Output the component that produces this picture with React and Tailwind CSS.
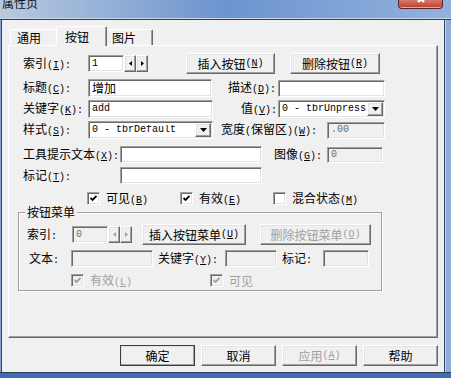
import React from "react";

// classic 3D edges
const raised =
  "border border-t-white border-l-white border-r-[#696969] border-b-[#696969] shadow-[inset_-1px_-1px_0_#a0a0a0,inset_1px_1px_0_#e3e3e3]";
const sunken =
  "border border-t-[#a0a0a0] border-l-[#a0a0a0] border-r-white border-b-white shadow-[inset_1px_1px_0_#696969,inset_-1px_-1px_0_#e3e3e3]";
const mono = "font-['Liberation_Mono',monospace] text-[10px]";

// "(X):" part of a label
function K({ k, colon = true }) {
  return (
    <span className={mono}>
      (<u className="underline-offset-1">{k}</u>){colon ? ":" : ""}
    </span>
  );
}

function Btn({ className = "", disabled, children }) {
  return (
    <button
      type="button"
      className={`${raised} flex items-center justify-center bg-[#f0f0f0] ${
        disabled ? "text-[#a0a0a0]" : "text-black"
      } ${className}`}
    >
      {children}
    </button>
  );
}

function Input({ className = "", value, disabled, isMono }) {
  return (
    <div
      className={`${sunken} flex items-center pl-[3px] overflow-hidden whitespace-nowrap ${
        disabled ? "bg-[#f0f0f0] text-[#6d6d6d]" : "bg-white"
      } ${className}`}
    >
      <span className={isMono ? mono : ""}>{value}</span>
    </div>
  );
}

function Arrow() {
  return (
    <svg width="7" height="4" viewBox="0 0 7 4">
      <path d="M0 0h7L3.5 4z" fill="black" />
    </svg>
  );
}

function Combo({ className = "", value }) {
  return (
    <div className={`${sunken} flex items-center bg-white ${className}`}>
      <span className={`flex-1 pl-[3px] overflow-hidden whitespace-nowrap ${mono}`}>
        {value}
      </span>
      <div
        className={`${raised} w-[16px] h-[14px] mr-[1px] flex items-center justify-center bg-[#f0f0f0]`}
      >
        <Arrow />
      </div>
    </div>
  );
}

function Spin({ disabled }) {
  const fill = disabled ? "#a0a0a0" : "black";
  return (
    <div className="flex">
      <div className={`${raised} w-[12px] h-[17px] flex items-center justify-center bg-[#f0f0f0]`}>
        <svg width="3" height="5" viewBox="0 0 3 5">
          <path d="M3 0v5L0 2.5z" fill={fill} />
        </svg>
      </div>
      <div className={`${raised} w-[12px] h-[17px] flex items-center justify-center bg-[#f0f0f0]`}>
        <svg width="3" height="5" viewBox="0 0 3 5">
          <path d="M0 0v5L3 2.5z" fill={fill} />
        </svg>
      </div>
    </div>
  );
}

function Check({ checked = true, disabled, children }) {
  return (
    <div className={`flex items-center gap-[6px] ${disabled ? "text-[#a0a0a0]" : ""}`}>
      <div
        className={`${sunken} w-[13px] h-[13px] flex items-center justify-center ${
          disabled ? "bg-[#f0f0f0]" : "bg-white"
        }`}
      >
        {checked && (
          <svg width="7" height="7" viewBox="0 0 7 7">
            <path
              d="M0.5 3L2.5 5L6.5 1"
              fill="none"
              stroke={disabled ? "#a0a0a0" : "black"}
              strokeWidth="1.8"
            />
          </svg>
        )}
      </div>
      <span>{children}</span>
    </div>
  );
}

export default function App() {
  return (
    <div className="w-[451px] h-[378px] overflow-hidden flex flex-col bg-[#7a9dd3] text-[12px] leading-none text-black font-['Noto_Sans_CJK_SC',sans-serif]">

      {/* TITLE BAR */}
      <div className="h-[20px] shrink-0 flex items-start bg-linear-to-r from-[#b9c9df] via-[#6c94ce] to-[#93b2de] border-b border-b-[#2e3e5b] shadow-[inset_0_-1px_0_#c9d9ee]">
        <span className="-mt-[3px] ml-[2px] text-[12px] leading-[12px] text-[#111]">
          属性页
        </span>
        <div className="ml-auto mr-[8px] w-[45px] h-[9px] rounded-b-[4px] border border-t-0 border-[#5a2420] bg-linear-to-b from-[#d9786a] to-[#b83a2c] shadow-[inset_0_-1px_0_#e8a59a] flex justify-center overflow-hidden">
          <svg width="12" height="6" viewBox="0 0 12 6" className="-mt-[1px]">
            <path d="M2 -4L9 3M10 -4L3 3" stroke="white" strokeWidth="2.4" />
          </svg>
        </div>
      </div>

      {/* MIDDLE */}
      <div className="flex h-[352px] shrink-0">

        {/* LEFT FRAME */}
        <div className="w-[2px] bg-[#8aa5d3] border-r border-r-[#34476a]" />

        {/* CLIENT */}
        <div className="w-[442px] bg-[#f0f0f0] flex flex-col pl-[6px] pt-[6px]">

          {/* TABS */}
          <div className="h-[19px] flex items-end">
            <div className="ml-[2px] w-[48px] h-[16px] flex items-center pl-[6px] border-t border-l border-t-white border-l-white rounded-tl-[2px]">
              通用
            </div>
            <div className="-ml-[2px] -mb-[1px] relative z-10 w-[51px] h-[20px] flex items-center pl-[8px] bg-[#f0f0f0] border-t border-l border-r border-t-white border-l-white border-r-[#696969] rounded-t-[2px] shadow-[inset_-1px_0_0_#a0a0a0]">
              按钮
            </div>
            <div className="-ml-[2px] w-[48px] h-[16px] flex items-center pl-[7px] border-t border-r border-t-white border-r-[#696969] rounded-tr-[2px] shadow-[inset_-1px_0_0_#a0a0a0]">
              图片
            </div>
          </div>

          {/* PANEL */}
          <div className="w-[430px] h-[293px] border border-t-white border-l-white border-r-[#696969] border-b-[#696969] shadow-[inset_-1px_-1px_0_#a0a0a0] flex flex-col">

            {/* ROW 1 */}
            <div className="mt-[7px] h-[21px] flex items-center">
              <span className="ml-[14px] w-[65px]">索引<K k="I" /></span>
              <Input className="w-[36px] h-[17px]" value="1" isMono />
              <Spin />
              <Btn className="ml-[38px] w-[89px] h-[21px]">插入按钮<K k="N" colon={false} /></Btn>
              <Btn className="ml-[15px] w-[90px] h-[21px]">删除按钮<K k="R" colon={false} /></Btn>
            </div>

            {/* ROW 2 */}
            <div className="mt-[5px] h-[18px] flex items-center">
              <span className="ml-[14px] w-[65px]">标题<K k="C" /></span>
              <Input className="w-[124px] h-[18px]" value="增加" />
              <span className="ml-[16px] w-[50px]">描述<K k="D" /></span>
              <Input className="w-[107px] h-[17px]" value="" />
            </div>

            {/* ROW 3 */}
            <div className="mt-[3px] h-[18px] flex items-center">
              <span className="ml-[14px] w-[65px]">关键字<K k="K" /></span>
              <Input className="w-[125px] h-[18px]" value="add" isMono />
              <span className="ml-[28px] w-[37px]">值<K k="V" /></span>
              <Combo className="w-[107px] h-[18px]" value="0 - tbrUnpress" />
            </div>

            {/* ROW 4 */}
            <div className="mt-[3px] h-[18px] flex items-center">
              <span className="ml-[14px] w-[65px]">样式<K k="S" /></span>
              <Combo className="w-[125px] h-[18px]" value="0 - tbrDefault" />
              <span className="ml-[8px] w-[106px] whitespace-nowrap">
                宽度<span className={mono}>(</span>保留区<span className={mono}>)</span><K k="W" />
              </span>
              <Input className="w-[58px] h-[17px]" value=".00" disabled isMono />
            </div>

            {/* ROW 5 */}
            <div className="mt-[7px] h-[17px] flex items-center">
              <span className="ml-[14px] w-[97px]">工具提示文本<K k="X" /></span>
              <Input className="w-[142px] h-[17px]" value="" />
              <span className="ml-[12px] w-[53px]">图像<K k="G" /></span>
              <Input className="w-[56px] h-[16px]" value="0" disabled isMono />
            </div>

            {/* ROW 6 */}
            <div className="mt-[4px] h-[17px] flex items-center">
              <span className="ml-[14px] w-[97px]">标记<K k="T" /></span>
              <Input className="w-[142px] h-[17px]" value="" />
            </div>

            {/* ROW 7 */}
            <div className="mt-[8px] h-[13px] flex items-center">
              <div className="ml-[78px] w-[93px]">
                <Check>可见<K k="B" colon={false} /></Check>
              </div>
              <div className="w-[93px]">
                <Check>有效<K k="E" colon={false} /></Check>
              </div>
              <Check checked={false}>混合状态<K k="M" colon={false} /></Check>
            </div>

            {/* BUTTON MENU GROUP */}
            <fieldset className="mt-[1px] ml-[9px] w-[364px] border border-[#a0a0a0] shadow-[inset_1px_1px_0_white,1px_1px_0_white] pb-[3px]">
              <legend className="ml-[6px] px-[2px] bg-[#f0f0f0] leading-[12px]">按钮菜单</legend>

              <div className="mt-[6px] h-[21px] flex items-center">
                <span className="ml-[8px] w-[45px]">索引<span className={mono}>:</span></span>
                <Input className="w-[36px] h-[17px]" value="0" disabled isMono />
                <Spin disabled />
                <Btn className="ml-[10px] w-[104px] h-[21px]">插入按钮菜单<K k="U" colon={false} /></Btn>
                <Btn className="ml-[14px] w-[111px] h-[21px]" disabled>删除按钮菜单<K k="O" colon={false} /></Btn>
              </div>

              <div className="mt-[5px] h-[17px] flex items-center">
                <span className="ml-[10px] w-[42px]">文本<span className={mono}>:</span></span>
                <Input className="w-[82px] h-[17px]" value="" disabled />
                <span className="ml-[5px] w-[67px]">关键字<K k="Y" /></span>
                <Input className="w-[52px] h-[17px]" value="" disabled />
                <span className="ml-[5px] w-[41px]">标记<span className={mono}>:</span></span>
                <Input className="w-[46px] h-[17px]" value="" disabled />
              </div>

              <div className="mt-[7px] h-[13px] flex items-center">
                <div className="ml-[52px] w-[139px]">
                  <Check disabled>有效<K k="L" colon={false} /></Check>
                </div>
                <Check disabled>可见</Check>
              </div>
            </fieldset>

          </div>

          {/* DIALOG BUTTONS */}
          <div className="mt-[7px] ml-[112px] flex gap-[6px]">
            <Btn className="w-[75px] h-[21px] outline outline-[#3c3c3c] -outline-offset-1">确定</Btn>
            <Btn className="w-[75px] h-[21px]">取消</Btn>
            <Btn className="w-[75px] h-[21px]" disabled>应用<K k="A" colon={false} /></Btn>
            <Btn className="w-[75px] h-[21px]">帮助</Btn>
          </div>

        </div>

        {/* RIGHT FRAME */}
        <div className="w-[7px] bg-[#8fadd9] border-l border-l-[#2f4366] shadow-[inset_1px_0_0_#c6d6ee]" />

      </div>

      {/* BOTTOM FRAME */}
      <div className="h-[6px] shrink-0 bg-[#3f6cb0] border-t border-t-[#2b3e60]" />

    </div>
  );
}
